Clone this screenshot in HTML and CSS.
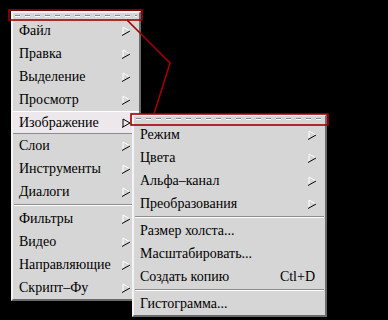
FILE: index.html
```html
<!DOCTYPE html>
<html lang="ru">
<head>
    <meta charset="UTF-8">
    <title>Меню изображения</title>
    <link rel="stylesheet" href="styles.css">
</head>
<body>
<div class="screen">

    <div class="menu main-menu">
        <div class="tearoff"></div>
        <div class="item">Файл <svg class="arrow" viewBox="0 0 10 10"><polyline points="1,9 1,1 8,5" class="hi"/><line x1="8" y1="5" x2="0" y2="9.5" class="lo"/></svg></div>
        <div class="item">Правка <svg class="arrow" viewBox="0 0 10 10"><polyline points="1,9 1,1 8,5" class="hi"/><line x1="8" y1="5" x2="0" y2="9.5" class="lo"/></svg></div>
        <div class="item">Выделение <svg class="arrow" viewBox="0 0 10 10"><polyline points="1,9 1,1 8,5" class="hi"/><line x1="8" y1="5" x2="0" y2="9.5" class="lo"/></svg></div>
        <div class="item">Просмотр <svg class="arrow" viewBox="0 0 10 10"><polyline points="1,9 1,1 8,5" class="hi"/><line x1="8" y1="5" x2="0" y2="9.5" class="lo"/></svg></div>
        <div class="item active">Изображение <svg class="arrow" viewBox="0 0 10 10"><polyline points="1,9 1,1 8,5" class="lo"/><line x1="8" y1="5" x2="0" y2="9.5" class="lo"/></svg></div>
        <div class="item">Слои <svg class="arrow" viewBox="0 0 10 10"><polyline points="1,9 1,1 8,5" class="hi"/><line x1="8" y1="5" x2="0" y2="9.5" class="lo"/></svg></div>
        <div class="item">Инструменты <svg class="arrow" viewBox="0 0 10 10"><polyline points="1,9 1,1 8,5" class="hi"/><line x1="8" y1="5" x2="0" y2="9.5" class="lo"/></svg></div>
        <div class="item">Диалоги <svg class="arrow" viewBox="0 0 10 10"><polyline points="1,9 1,1 8,5" class="hi"/><line x1="8" y1="5" x2="0" y2="9.5" class="lo"/></svg></div>
        <div class="sep"></div>
        <div class="item">Фильтры <svg class="arrow" viewBox="0 0 10 10"><polyline points="1,9 1,1 8,5" class="hi"/><line x1="8" y1="5" x2="0" y2="9.5" class="lo"/></svg></div>
        <div class="item">Видео <svg class="arrow" viewBox="0 0 10 10"><polyline points="1,9 1,1 8,5" class="hi"/><line x1="8" y1="5" x2="0" y2="9.5" class="lo"/></svg></div>
        <div class="item">Направляющие <svg class="arrow" viewBox="0 0 10 10"><polyline points="1,9 1,1 8,5" class="hi"/><line x1="8" y1="5" x2="0" y2="9.5" class="lo"/></svg></div>
        <div class="item">Скрипт–Фу <svg class="arrow" viewBox="0 0 10 10"><polyline points="1,9 1,1 8,5" class="hi"/><line x1="8" y1="5" x2="0" y2="9.5" class="lo"/></svg></div>
    </div>

    <div class="menu sub-menu">
        <div class="tearoff"></div>
        <div class="item">Режим <svg class="arrow" viewBox="0 0 10 10"><polyline points="1,9 1,1 8,5" class="hi"/><line x1="8" y1="5" x2="0" y2="9.5" class="lo"/></svg></div>
        <div class="item">Цвета <svg class="arrow" viewBox="0 0 10 10"><polyline points="1,9 1,1 8,5" class="hi"/><line x1="8" y1="5" x2="0" y2="9.5" class="lo"/></svg></div>
        <div class="item">Альфа–канал <svg class="arrow" viewBox="0 0 10 10"><polyline points="1,9 1,1 8,5" class="hi"/><line x1="8" y1="5" x2="0" y2="9.5" class="lo"/></svg></div>
        <div class="item">Преобразования <svg class="arrow" viewBox="0 0 10 10"><polyline points="1,9 1,1 8,5" class="hi"/><line x1="8" y1="5" x2="0" y2="9.5" class="lo"/></svg></div>
        <div class="sep"></div>
        <div class="item">Размер холста...</div>
        <div class="item">Масштабировать...</div>
        <div class="item">Создать копию <span class="accel">Ctl+D</span></div>
        <div class="sep"></div>
        <div class="item">Гистограмма...</div>
    </div>

    <!-- red annotation linking the tear-off strips -->
    <svg class="marks" width="388" height="320" viewBox="0 0 388 320">
        <rect x="9" y="10" width="133" height="10" />
        <rect x="131" y="114" width="197" height="11" />
        <polyline points="127,20 170,63 154,114" />
    </svg>

</div>
</body>
</html>
```

FILE: styles.css
```css
body {
    margin: 0;
    background: #000;
    font-family: "Liberation Serif", "Times New Roman", serif;
    font-size: 14px;
    color: #000;
}
.screen {
    position: relative;
    width: 388px;
    height: 320px;
    overflow: hidden;
    background: #000;
}
.menu {
    background: #d6d6d6;
    border: 2px solid;
    border-color: #f4f4f4 #6a6a6a #6a6a6a #f4f4f4;
    box-sizing: border-box;
}
.main-menu {
    margin: 11px 0 0 11px;
    width: 130px;
}
.sub-menu {
    position: absolute;
    left: 132px;
    top: 114px;
    width: 195px;
}
.tearoff {
    height: 7px;
    margin: 0 2px;
    background:
        repeating-linear-gradient(90deg, #ffffff 0 5px, transparent 5px 10px) 0 3px / 100% 1px no-repeat,
        repeating-linear-gradient(90deg, #8c8c8c 0 5px, transparent 5px 10px) 0 2px / 100% 1px no-repeat;
}
.main-menu .tearoff {
    height: 6px;
}
.item {
    height: 23px;
    display: flex;
    align-items: center;
    justify-content: space-between;
    padding: 0 7px 0 6px;
    white-space: nowrap;
    box-sizing: border-box;
}
.item.active {
    background: #ece8ec;
    border-top: 1px solid #fff;
    border-bottom: 1px solid #8c8c8c;
}
.arrow {
    width: 10px;
    height: 10px;
    flex: none;
}
.arrow polyline, .arrow line {
    fill: none;
    stroke-width: 1;
}
.arrow .hi {
    stroke: #fff;
}
.arrow .lo {
    stroke: #000;
}
.accel {
    padding-right: 3px;
}
.sep {
    height: 4px;
    margin: 0 1px;
    background:
        linear-gradient(#8c8c8c, #8c8c8c) 0 1px / 100% 1px no-repeat,
        linear-gradient(#fff, #fff) 0 2px / 100% 1px no-repeat;
}
.marks {
    position: absolute;
    left: 0;
    top: 0;
    pointer-events: none;
}
.marks rect, .marks polyline {
    fill: none;
    stroke: #a00000;
    stroke-width: 1.6;
}
```
